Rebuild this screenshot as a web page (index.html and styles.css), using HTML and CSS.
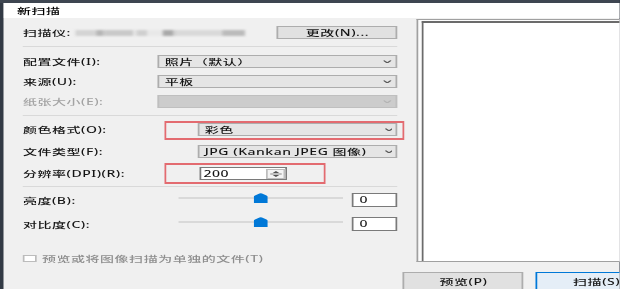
FILE: index.html
```html
<!DOCTYPE html>
<html lang="zh-CN">
<head>
<meta charset="utf-8">
<title>新扫描</title>
<link rel="stylesheet" href="styles.css">
</head>
<body>
<div class="screen">
  <div class="topbar"></div>
  <div class="window">
    <div class="titlebar">新扫描</div>
    <div class="body">
      <div class="form">
        <div class="scanner">
          <span class="label">扫描仪:</span>
          <span class="redacted"><i></i><i></i><i></i><i></i><i></i><i></i><i></i><i></i><i></i><i></i></span>
          <button class="btn change">更改(N)...</button>
        </div>
        <div class="sep"></div>
        <div class="grid g1">
          <span class="label">配置文件(I):</span>
          <div class="combo"><span>照片（默认）</span><svg class="chev" viewBox="0 0 10 6" preserveAspectRatio="none"><polyline points="0.5,0.8 5,5 9.5,0.8" fill="none" stroke="#5a5a5a" stroke-width="1" vector-effect="non-scaling-stroke"/></svg></div>
          <span class="label">来源(U):</span>
          <div class="combo"><span>平板</span><svg class="chev" viewBox="0 0 10 6" preserveAspectRatio="none"><polyline points="0.5,0.8 5,5 9.5,0.8" fill="none" stroke="#5a5a5a" stroke-width="1" vector-effect="non-scaling-stroke"/></svg></div>
          <span class="label disabled">纸张大小(E):</span>
          <div class="combo off"><span></span><svg class="chev" viewBox="0 0 10 6" preserveAspectRatio="none"><polyline points="0.5,0.8 5,5 9.5,0.8" fill="none" stroke="#b4b4b4" stroke-width="1" vector-effect="non-scaling-stroke"/></svg></div>
        </div>
        <div class="sep sep2"></div>
        <div class="grid g2">
          <span class="label">颜色格式(O):</span>
          <div class="combo"><span>彩色</span><svg class="chev" viewBox="0 0 10 6" preserveAspectRatio="none"><polyline points="0.5,0.8 5,5 9.5,0.8" fill="none" stroke="#5a5a5a" stroke-width="1" vector-effect="non-scaling-stroke"/></svg></div>
          <span class="label">文件类型(F):</span>
          <div class="combo"><span>JPG (Kankan JPEG 图像)</span><svg class="chev" viewBox="0 0 10 6" preserveAspectRatio="none"><polyline points="0.5,0.8 5,5 9.5,0.8" fill="none" stroke="#5a5a5a" stroke-width="1" vector-effect="non-scaling-stroke"/></svg></div>
          <span class="label">分辨率(DPI)(R):</span>
          <div class="spin"><span>200</span><span class="spinner"><svg viewBox="0 0 10 10" preserveAspectRatio="none"><polygon points="3,3.8 5,1.4 7,3.8" fill="#505050"/><line x1="1.5" y1="5" x2="8.5" y2="5" stroke="#8a8a8a" stroke-width="1" vector-effect="non-scaling-stroke"/><polygon points="3,6.2 5,8.6 7,6.2" fill="#505050"/></svg></span></div>
        </div>
        <div class="sep sep3"></div>
        <div class="sliders">
          <span class="label">亮度(B):</span>
          <div class="slider"><div class="track"></div><svg class="thumb" viewBox="0 0 8 10" preserveAspectRatio="none"><path d="M0 3.6 Q0 2.8 1 2.2 L3.3 0.4 Q4 0 4.7 0.4 L7 2.2 Q8 2.8 8 3.6 L8 10 L0 10 Z" fill="#0078d7"/></svg></div>
          <div class="val">0</div>
          <span class="label">对比度(C):</span>
          <div class="slider"><div class="track"></div><svg class="thumb" viewBox="0 0 8 10" preserveAspectRatio="none"><path d="M0 3.6 Q0 2.8 1 2.2 L3.3 0.4 Q4 0 4.7 0.4 L7 2.2 Q8 2.8 8 3.6 L8 10 L0 10 Z" fill="#0078d7"/></svg></div>
          <div class="val">0</div>
        </div>
        <div class="check"><span class="box"></span><span>预览或将图像扫描为单独的文件(T)</span></div>
        <div class="hl hl1"></div>
        <div class="hl hl2"></div>
      </div>
      <div class="preview"><div class="preview-inner"></div></div>
    </div>
    <div class="footer">
      <button class="btn fbtn">预览(P)</button>
      <button class="btn fbtn default">扫描(S)</button>
    </div>
  </div>
</div>
</body>
</html>
```
FILE: styles.css
```css
* { box-sizing: border-box; }
html, body { margin: 0; padding: 0; overflow: hidden; background: #323a45; }
body { width: 620px; height: 289px; }

.screen {
  width: 354.29px;
  height: 289px;
  transform: scaleX(1.75);
  transform-origin: 0 0;
  display: flex;
  flex-direction: column;
  background: #323a45;
  font-family: "Noto Sans", "Noto Sans CJK SC", sans-serif;
  font-size: 8px;
  font-weight: 500;
  letter-spacing: 0.3px;
  color: #141414;
}
.topbar { flex: none; height: 3px; background: #3e4651; }
.window {
  flex: 1;
  margin-left: 2.3px;
  background: #f0f0f0;
  overflow: hidden;
  display: flex;
  flex-direction: column;
}
.titlebar {
  flex: none;
  height: 15px;
  line-height: 15px;
  background: #fff;
  padding-left: 7.4px;
  color: #000;
}
.body { flex: none; display: flex; height: 244px; }

.form {
  flex: none;
  width: 235.4px;
  padding: 0 10.3px 0 10.8px;
  position: relative;
  display: flex;
  flex-direction: column;
}
.label { line-height: 13px; white-space: nowrap; }
.label.disabled { color: #a3a3a3; }

.scanner { display: flex; align-items: center; height: 13px; margin-top: 8px; }
.scanner .label { flex: none; width: 29.8px; }
.redacted { display: flex; height: 6px; width: 98.2px; filter: blur(0.9px); }
.redacted i { display: block; height: 100%; }
.redacted i:nth-child(1) { width: 12.6px; background: #d4d4d4; }
.redacted i:nth-child(2) { width: 3.4px; background: #b5b5b5; }
.redacted i:nth-child(3) { width: 17.1px; background: #c9c9c9; }
.redacted i:nth-child(4) { width: 2.3px; background: #e6e6e6; }
.redacted i:nth-child(5) { width: 5.7px; background: #cfcfcf; }
.redacted i:nth-child(6) { width: 8.6px; background: #e8e8e8; }
.redacted i:nth-child(7) { width: 6.3px; background: #a9a9a9; }
.redacted i:nth-child(8) { width: 2.3px; background: #d0d0d0; }
.redacted i:nth-child(9) { width: 25.7px; background: #d9d9d9; }
.redacted i:nth-child(10) { width: 13.1px; background: #bbbbbb; }

.btn {
  font: inherit;
  letter-spacing: inherit;
  color: #141414;
  margin: 0;
  padding: 0;
  border: 1px solid #adadad;
  background: #e1e1e1;
  text-align: center;
}
.change { margin-left: auto; width: 69.1px; height: 13px; line-height: 11px; }

.sep { height: 1px; background: #d9d9d9; margin-top: 7px; flex: none; }
.sep2 { margin-top: 7px; }
.sep3 { margin-top: 6px; }

.grid { display: grid; align-items: center; }
.g1 { grid-template-columns: 76.6px 137.7px; row-gap: 7px; margin-top: 8px; }
.g2 { grid-template-columns: 99.5px 114.8px; row-gap: 9px; margin-top: 7px; }

.combo {
  height: 13px;
  border: 1px solid #adadad;
  background: #e5e5e5;
  display: flex;
  align-items: center;
  justify-content: space-between;
  padding: 0 2.3px 0 3.4px;
  line-height: 11px;
  white-space: nowrap;
}
.combo.off { background: #cccccc; border-color: #bfbfbf; }
.chev { width: 4.6px; height: 3.5px; flex: none; }

.spin {
  width: 50.9px;
  height: 13px;
  margin-left: 1px;
  border: 1px solid #7a7a7a;
  background: #fff;
  display: flex;
  align-items: center;
  justify-content: space-between;
  padding: 0 0.4px 0 1.7px;
  line-height: 11px;
}
.spinner {
  width: 11.4px;
  height: 10px;
  border: 1px solid #bdbdbd;
  background: #f3f3f3;
  display: flex;
}
.spinner svg { width: 100%; height: 100%; }

.sliders {
  display: grid;
  grid-template-columns: 83.6px 94.3px 26px;
  column-gap: 5px;
  row-gap: 10px;
  margin-top: 6px;
  align-items: center;
}
.slider { position: relative; height: 14px; }
.track { margin-top: 4px; height: 2px; background: #d9d9d9; }
.thumb { position: absolute; left: calc(50% - 4px); top: 0; width: 8px; height: 10px; }
.val {
  width: 26px;
  height: 14px;
  border: 1px solid #7a7a7a;
  background: #fff;
  padding-left: 3.4px;
  line-height: 12px;
  color: #222;
}

.check {
  display: flex;
  align-items: center;
  height: 7px;
  margin-top: 24px;
  color: #8e8e8e;
  white-space: nowrap;
  line-height: 7px;
}
.box {
  flex: none;
  width: 8px;
  height: 7px;
  border: 1px solid #bcbcbc;
  background: #fff;
  margin-right: 2.9px;
}

.hl {
  position: absolute;
  border-style: solid;
  border-color: #e36b70;
  border-width: 2px 1px;
}
.hl1 { left: 92px; top: 103px; width: 137.1px; height: 19px; }
.hl2 { left: 92px; top: 145px; width: 92px; height: 21px; }

.preview {
  flex: none;
  width: 130px;
  height: 243px;
  margin-top: 1px;
  border: 1px solid #a0a0a0;
  border-right: none;
  background: #fbfbfb;
  padding: 1px 0 0 2.1px;
}
.preview-inner {
  height: 100%;
  background: #fff;
  border-left: 1px solid #6b6b6b;
  border-top: 2px solid #6b6b6b;
}

.footer { flex: none; display: flex; gap: 7px; padding: 10px 0 0 228px; }
.fbtn { flex: none; width: 69.1px; height: 20px; line-height: 18px; }
.fbtn.default { border-color: #0078d7; background: #e5eef7; }
```
